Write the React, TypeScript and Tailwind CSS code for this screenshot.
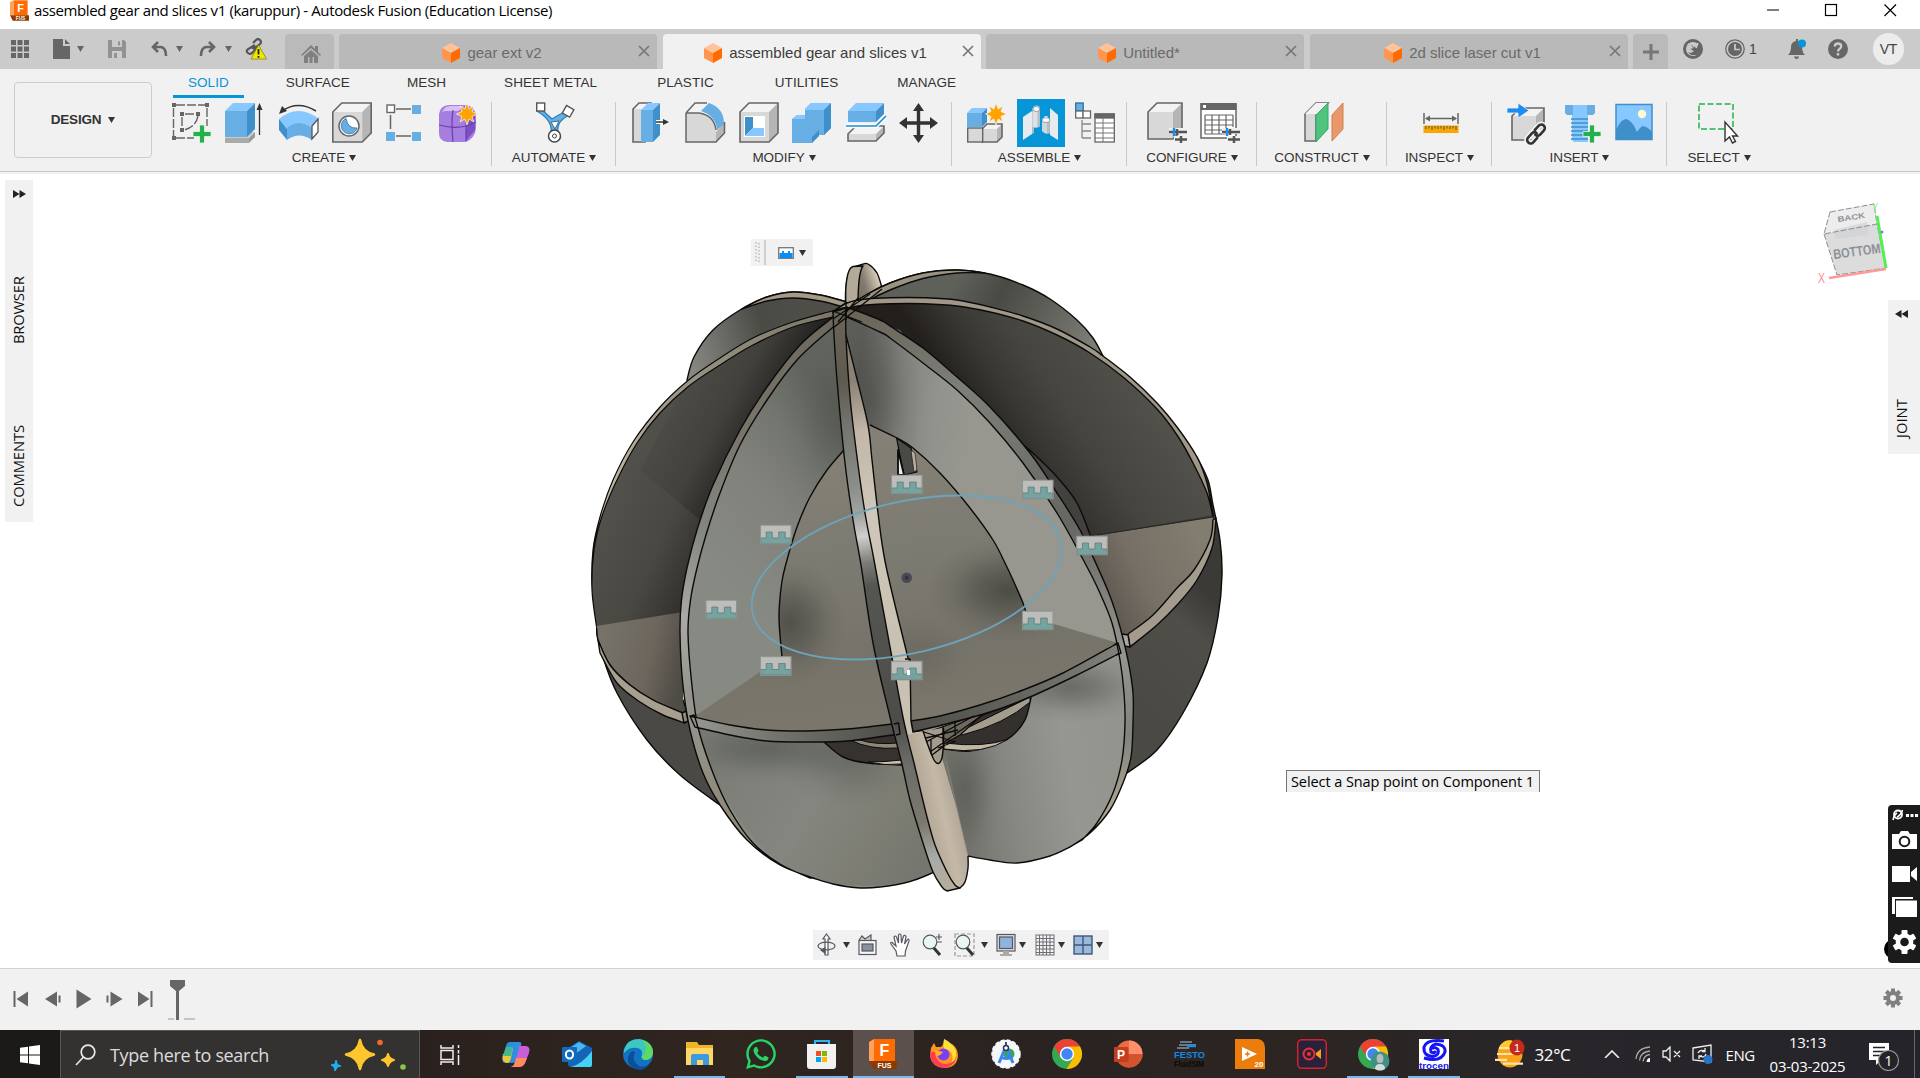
import React from "react";
import { FaWhatsapp } from "react-icons/fa";

type Pt = [number, number];

/* Smooth curve through a list of "x,y" points. */
function curve(points: string, start: "M" | "L" = "M"): string {
  const p: Pt[] = points
    .trim()
    .split(/\s+/)
    .map((s) => s.split(",").map(Number) as Pt);
  let d = `${start}${p[0][0]} ${p[0][1]}`;
  for (let i = 0; i < p.length - 1; i++) {
    const a = p[i - 1] ?? p[i];
    const b = p[i];
    const c = p[i + 1];
    const e = p[i + 2] ?? c;
    const x1 = b[0] + (c[0] - a[0]) / 6;
    const y1 = b[1] + (c[1] - a[1]) / 6;
    const x2 = c[0] - (e[0] - b[0]) / 6;
    const y2 = c[1] - (e[1] - b[1]) / 6;
    d += `C${x1.toFixed(1)} ${y1.toFixed(1)} ${x2.toFixed(1)} ${y2.toFixed(1)} ${c[0]} ${c[1]}`;
  }
  return d;
}

const rev = (points: string) => points.trim().split(/\s+/).reverse().join(" ");
const band = (outer: string, inner: string) => curve(outer) + curve(rev(inner), "L") + "Z";

/* ---------- Model curves ---------- */
const backLeftOut = "687,380 694,357 713,330 740,310 767,297 793,292 820,295 847,302";
const backLeftIn = "742,309 767,301 793,298 820,301 847,308";
const backRightOut = "832,319 847,307 866,295 890,283 923,273 957,270 990,274 1023,285 1050,299 1077,320 1093,338 1103.5,357";
const backRightIn = "832,328 847,315 866,302 890,290 923,278.5 957,273 985,273";
const rightOut =
  "833,312 847,303 866,299 890,297.7 923,297.7 957,300 990,307 1023,316 1057,329 1090,347 1103,356 1130,377 1157,403 1177,427 1197,457 1207,483 1213,515";
const rightIn = "847,308 866,305 890,303.7 923,303.7 957,306 990,312 1023,321 1057,335 1090,353 1123,377 1157,409 1177,435 1193,463 1207,493 1213,517";
const rightSilhouette = "1197,457 1208,480 1213,505 1220,540 1222,575 1218,617 1207,663 1183,713 1157,750 1127,773";
const leftOut = "847,307 832,311 793,322 753,338 720,358 687.7,380.7 660,407 633,442 613,480 600,517 593,550 592,590 596.7,628";
const leftIn = "847,313 832,317 793,327 753,345 720,365 687.7,387 660,413 637,443 617,480 601.7,517 594,550";
const leftSilhouette = "596.7,628 601.7,653 617,693 647,740 680,775 720,805";
const aOut =
  "847,307 832,318 800,345 767,387 740,430 713,485 697,530 687,568 681.5,600 680,633 682.7,683 690,730 703,773 720,805 747,840 780,865 813,878";
const aIn =
  "847,317 832,328 797,360 767,400 740,445 720,493 706,535 697,568 690.5,600 688,633 691.7,683 698,727 713,773 730,810 753,843 780,864 810,878";
const aBottom = "813,878 833,884 857,887.7 880,887 910,881.5 933,872.7";
const aHole = "844,450 827,470 810,497 797,527 787,560 781.7,583 779,617 782,657";
const cOut =
  "833,313 847,308 880,320 890,326 923,348 957,377 990,407 1030,453 1057,493 1080,530 1098,568 1110,596 1120,627 1128,660 1133,693 1133,723 1131,757 1123,783 1110,810 1090,833 1070,847";
const cIn =
  "847,317 880,332 890,338 923,363 957,390 990,423 1023,463 1057,513 1086,565 1099,591 1112,623 1120,660 1124,693 1125,723 1122,760 1113,793 1097,823 1082,840";
const cBottom = "1070,847 1050,856 1017,863 990,860 968,856";
const cHole = "870,425 895,437 913,448 940,473 970,508 993,540 1005,563 1013,580 1023,603 1027,616";
const rimLT = "690,716 730,725 767,730 807,731 847,729 892,724 898,723";
const rimLB = "695,727 730,735 767,741 807,742 847,741 900,734";
const rimRT = "910.7,721 940,716 980,705 1023,690 1063,673 1118,643";
const rimRB = "913,732 950,723 990,712 1030,697 1073,677 1120,653";
const dL = "833,312 834,335 837,380 845,463 853,520 861,565 873,643 890,717 901.7,763 910,800 923,843 933,872 942,887 947,891";
const dR = "846,308 846,337 850,397 857,457 865,513 874,560 890,647 904,722 914,763 926,813 935,845 947,872 955,885 960,888";
const creamR = "846,335 856,375 868,425 872,460 878,513 886,566 908,658";
const farRimIn = "598,640 610,665 630,685 653,700 683,713";
const farRimOut = "600,653 617,683 640,702 663,715 685,723";
const nearRimIn = "1213,520 1210,540 1194,570 1177,588 1153,615 1128,634";
const nearRimOut = "1216,518 1212,548 1197,580 1177,605 1157,625 1130,647";

const snapPoints: Pt[] = [
  [906.7, 484.5],
  [1037.7, 489.5],
  [1092, 545.5],
  [775.7, 534.5],
  [721.3, 609.5],
  [775.7, 666],
  [1037.7, 620.5],
  [906.7, 670.5],
];

function Lin(props: { id: string; x1: number; y1: number; x2: number; y2: number; stops: [number, string][] }) {
  const { id, x1, y1, x2, y2, stops } = props;
  return (
    <linearGradient id={id} gradientUnits="userSpaceOnUse" x1={x1} y1={y1} x2={x2} y2={y2}>
      {stops.map(([o, c], i) => (
        <stop key={i} offset={o} stopColor={c} />
      ))}
    </linearGradient>
  );
}

function Model() {
  const faceA = curve(aIn) + curve(aBottom, "L") + "L915 820L846 317Z";
  const faceC = curve(cIn) + curve(cBottom, "L") + "L945 750L905 735L846 425L846 317Z";
  const floor = curve(aHole) + "L698 714" + curve(rimLT, "L") + curve(rimRT, "L") + "L1027 616" + curve(rev(cHole), "L") + "Z";
  return (
    <svg className="block h-[650px] w-[650px]" viewBox="580 250 650 650" fill="none">
      <defs>
        <Lin id="gBackL" x1={690} y1={360} x2={840} y2={310} stops={[[0, "#868781"], [0.22, "#6d6e69"], [0.5, "#4b4b46"], [1, "#504f4a"]]} />
        <Lin id="gBackR" x1={960} y1={275} x2={1090} y2={350} stops={[[0, "#5e605a"], [0.3, "#4a4a45"], [0.65, "#61625c"], [1, "#7c7e77"]]} />
        <Lin id="gLeft" x1={600} y1={480} x2={735} y2={540} stops={[[0, "#54534e"], [0.55, "#484742"], [0.85, "#33312e"], [1, "#242220"]]} />
        <Lin id="gLeftTop" x1={690} y1={380} x2={770} y2={425} stops={[[0, "#4a4944"], [0.5, "#403f3a"], [1, "#1f1d1b"]]} />
        <Lin id="gRight" x1={968} y1={410} x2={1100} y2={320} stops={[[0, "#221f1c"], [0.25, "#383632"], [0.5, "#45443f"], [1, "#52514c"]]} />
        <Lin id="gRightLow" x1={1130} y1={700} x2={1215} y2={600} stops={[[0, "#4b4944"], [0.7, "#504e49"], [1, "#3b3a37"]]} />
        <Lin id="gFloorL" x1={600} y1={640} x2={685} y2={660} stops={[[0, "#77736a"], [0.6, "#6c665d"], [1, "#4f4b45"]]} />
        <Lin id="gFloorR" x1={1105} y1={610} x2={1210} y2={560} stops={[[0, "#5c564e"], [0.4, "#766f66"], [1, "#817d6f"]]} />
        <Lin id="gA" x1={700} y1={560} x2={850} y2={420} stops={[[0, "#878983"], [0.45, "#80827b"], [0.75, "#73756f"], [1, "#62645e"]]} />
        <Lin id="gA2" x1={730} y1={740} x2={930} y2={860} stops={[[0, "#7b7d76"], [0.45, "#84867f"], [0.75, "#7d7d73"], [1, "#74776f"]]} />
        <Lin id="gC" x1={855} y1={420} x2={965} y2={430} stops={[[0, "#5e5e5a"], [0.35, "#7f7f7b"], [0.7, "#92928d"], [1, "#979790"]]} />
        <Lin id="gC2" x1={950} y1={790} x2={1120} y2={760} stops={[[0, "#73736d"], [0.35, "#888883"], [0.7, "#979791"], [1, "#93948d"]]} />
        <Lin id="gFloor" x1={850} y1={440} x2={880} y2={740} stops={[[0, "#858076"], [0.35, "#7d7c72"], [0.7, "#76736a"], [1, "#7c776b"]]} />
        <Lin id="gD" x1={835} y1={310} x2={950} y2={890} stops={[[0, "#6b6557"], [0.12, "#5f5a50"], [0.2, "#747670"], [0.3, "#8b8e89"], [0.35, "#a4a6a2"], [0.385, "#cfcfcd"], [0.43, "#7b7b78"], [0.47, "#555551"], [0.7, "#4c4c48"], [0.78, "#6d6e69"], [0.88, "#7b796e"], [0.94, "#a9aaa7"], [1, "#b7ae9b"]]} />
        <Lin id="gCream" x1={850} y1={380} x2={905} y2={640} stops={[[0, "#8b8174"], [0.2, "#c2b7a8"], [0.5, "#cfc7b9"], [1, "#c9c1b1"]]} />
        <Lin id="gCreamLow" x1={920} y1={793} x2={960} y2={784} stops={[[0, "#b3a897"], [0.45, "#c4b8a7"], [0.8, "#b4a999"], [1, "#948c80"]]} />
        <Lin id="gRimA" x1={850} y1={310} x2={740} y2={840} stops={[[0, "#6b665c"], [0.25, "#77746a"], [0.45, "#83857f"], [0.62, "#aaa9a5"], [0.75, "#969690"], [1, "#8e8775"]]} />
        <Lin id="gRimC" x1={860} y1={310} x2={1110} y2={820} stops={[[0, "#6a6457"], [0.2, "#7c7f79"], [0.5, "#666762"], [0.75, "#94958f"], [0.88, "#81837c"], [1, "#b0a894"]]} />
        <Lin id="gRimL" x1={690} y1={720} x2={900} y2={730} stops={[[0, "#979892"], [0.4, "#74756e"], [1, "#4b4a46"]]} />
        <Lin id="gRimR" x1={910} y1={720} x2={1120} y2={650} stops={[[0, "#4f4e4a"], [0.5, "#64655f"], [1, "#7f817a"]]} />
        <Lin id="gTab" x1={850} y1={290} x2={880} y2={280} stops={[[0, "#6a6354"], [0.5, "#857b6e"], [1, "#ddd2be"]]} />
        <Lin id="gTan" x1={600} y1={500} x2={850} y2={310} stops={[[0, "#c6bca8"], [0.4, "#9c9687"], [1, "#7a7365"]]} />
        <radialGradient id="shade">
          <stop offset="0" stopColor="#2e302c" stopOpacity="0.7" />
          <stop offset="0.35" stopColor="#2e302c" stopOpacity="0.45" />
          <stop offset="0.7" stopColor="#2e302c" stopOpacity="0.13" />
          <stop offset="1" stopColor="#2e302c" stopOpacity="0" />
        </radialGradient>
        <clipPath id="clipFloor">
          <path d={floor} />
        </clipPath>
        <clipPath id="clipA">
          <path d={faceA} />
        </clipPath>
        <clipPath id="clipC">
          <path d={faceC} />
        </clipPath>
      </defs>

      <g stroke="#0c0b0a" strokeWidth="1.4" strokeLinejoin="round">
        {/* rear discs */}
        <path d={curve(backLeftOut) + "L847 325L700 400Z"} fill="url(#gBackL)" />
        <path d={band("742,309 767,297 793,292 820,295 847,302", backLeftIn)} fill="#a39a89" />
        <path d={curve("846,315 845.7,290 850,270 862,264.5 868,264 877,273 882,288") + "L884 320Z"} fill="url(#gTab)" />
        <path d="M845.7 310V290Q847 268 853 266.500L863 266Q858 272 858 306Z" fill="#b4aa98" />
        <path d={curve(backRightOut) + "L1000 360L850 320Z"} fill="url(#gBackR)" />
        <path d={band("832,319 847,307 866,295 890,283 923,273 957,270 985,273", backRightIn)} fill="#9b9382" />

        {/* right disc */}
        <path d={curve(rightSilhouette) + "L1090 640L1100 500Z"} fill="url(#gRightLow)" />
        <path d={curve(rightOut) + "L1086 537L900 330Z"} fill="url(#gRight)" stroke="none" />
        <path d={band(rightOut, rightIn)} fill="#9f9787" />
        <path d={curve("1022,444 1035,455 1057,477 1077,503 1092,540") + "L1080 560L1020 470Z"} fill="#43413d" />
        <path d={"M1082 538L1213 517" + curve(nearRimIn, "L") + "L1100 630Z"} fill="url(#gFloorR)" stroke="none" />
        <path d="M1090 536L1213 517" strokeWidth="1.2" stroke="#262421" />
        <path d={band(nearRimIn, nearRimOut)} fill="#a39c8d" />
        <path d="M1122 634L1128 635L1130 647L1124 646Z" fill="#a8a7a1" />

        {/* left disc */}
        <path d={curve(leftOut) + "L690 640L850 315Z"} fill="url(#gLeft)" stroke="none" />
        <path d={"M687 383" + curve("720,362 753,342 793,325 832,314 847,310", "L") + "L832 330L800 360L767 400L735 450L700 520L640 470Z"} fill="url(#gLeftTop)" stroke="none" opacity=".75" />
        <path d={"M596.7 628" + curve(leftSilhouette, "L") + "L683 700Z"} fill="#4b4945" />
        <path d={band(leftOut, leftIn + " 592,590 596.7,628")} fill="url(#gTan)" strokeWidth="1.2" />
        <path d={"M596.7 626L683 612V713" + curve(rev(farRimIn), "L") + "Z"} fill="url(#gFloorL)" stroke="none" />
        <path d={curve("596.7,628 598,640 610,665 630,685 653,700 683,713")} />
        <path d={band(farRimIn, farRimOut)} fill="#a79f8f" />
        <path d="M682 713L686 711L688 721L684 723Z" fill="#8e8c84" />

        {/* front faces */}
        <path d={faceA} fill="url(#gA)" stroke="none" />
        <path d="M695 727Q800 755 905 734L935 872L905 882Q850 893 800 874Q735 845 695 727Z" fill="url(#gA2)" stroke="none" />
        <path d={curve(aBottom)} />
        <g clipPath="url(#clipA)" stroke="none">
          <ellipse cx="840" cy="425" rx="60" ry="95" fill="url(#shade)" opacity=".35" />
          <ellipse cx="770" cy="748" rx="110" ry="36" fill="url(#shade)" opacity=".5" />
          <ellipse cx="850" cy="760" rx="70" ry="50" fill="url(#shade)" opacity=".4" />
        </g>
        <path d={faceC} fill="url(#gC)" stroke="none" />
        <path d={"M925 738L1120 653L1125 720Q1125 800 1070 847" + curve(cBottom, "L") + "L950 850Z"} fill="url(#gC2)" stroke="none" />
        <path d={curve(cBottom)} />
        <g clipPath="url(#clipC)" stroke="none">
          <ellipse cx="872" cy="400" rx="50" ry="100" fill="url(#shade)" opacity=".5" />
          <ellipse cx="1070" cy="687" rx="80" ry="36" fill="url(#shade)" opacity=".6" />
          <ellipse cx="966" cy="790" rx="36" ry="80" fill="url(#shade)" opacity=".45" />
        </g>

        {/* floor disc seen through the openings */}
        <path d={floor} fill="url(#gFloor)" stroke="none" />
        <g clipPath="url(#clipFloor)" stroke="none">
          <ellipse cx="790" cy="622" rx="55" ry="62" fill="url(#shade)" opacity=".75" />
          <ellipse cx="1008" cy="590" rx="82" ry="52" fill="url(#shade)" opacity=".85" />
          <ellipse cx="920" cy="655" rx="55" ry="45" fill="url(#shade)" opacity=".2" />
        </g>
        <path d={curve(aHole)} />
        <path d={curve(cHole)} />
        <path d="M896.5 438L904 475L917 472L911 448Z" fill="#494945" strokeWidth="1.2" />
        <path d="M898 450V475H904Z" fill="#e8e8e8" strokeWidth="1.8" />
        <path d="M911 450L914 472L917 470L915 453Z" fill="#b9b0a4" strokeWidth=".6" />

        {/* lower rear openings */}
        <path d={curve("824,742 843,757 867,763 902,765") + "L898 734Z"} fill="#35322f" />
        <path d="M850 740Q870 750 898 748V743Q875 745 860 740Z" fill="#8f8879" strokeWidth="1" />
        <path d="M868 762Q885 766 902 764V760Q885 762 868 762Z" fill="#c9c0ae" strokeWidth="1" />
        <path d={curve("1031,698 1025,720 1013,735 1000,743 970,751 944,749") + "L930 735L990 712Z"} fill="#33302d" />
        <path d="M944 749Q985 755 1008 739Q985 748 944 743Z" fill="#c0b7a4" strokeWidth="1" />
        <path d="M957 733L1030 697L1030 702Q1005 724 962 735Z" fill="#a49c8c" strokeWidth="1" />
        <path d="M925 733L985 712L960 735L928 753Z" fill="#6f6a60" strokeWidth="1.2" />

        {/* disc rims */}
        <path d={band(rimRT, rimRB)} fill="url(#gRimR)" />
        <path d={band(aOut, aIn)} fill="url(#gRimA)" />
        <path d={band(cOut, cIn)} fill="url(#gRimC)" />
        <path d={band(rimLT, rimLB)} fill="url(#gRimL)" />
        <path d="M1114 645L1118 643L1121 653L1116 655" />
        <path d="M691 716L694 715Q696 720 698 728" />

        {/* front upright disc */}
        <path d={curve(creamR) + "L911 687V721L913 732H923L942 760L957 810L968 856L966 880L960 888" + curve(rev(dR), "L") + "Z"} fill="url(#gCream)" stroke="none" />
        <path d={"M905 735L923 732L942 758L957 810L968 856Q969 884 960 888" + curve("960,888 947,872 935,845 914,763 905,735", "L") + "Z"} fill="url(#gCreamLow)" stroke="none" />
        <path d={curve(creamR)} />
        <path d="M905 659L910 659L911 721L913 732L923 730" />
        <path d={curve("968,856 968,868 965,882 960,888")} />
        <path d={band(dL, dR)} fill="url(#gD)" />
        <path d="M894 724L898.5 723L900 734L896 735" />
        <path d="M923 731Q930 752 934 760Q939 768 942 758Q944 748 943.500 728" fill="#a39b8c" />
        <path d="M926 738L958 730M926 742L974 716M930 752L984 714M932 755L944 746M938 748L956 741M955 722V736M924 732L955 742M943 726V742M931 740V754" strokeWidth="1.3" />
        <path d="M945 757L968 856" stroke="#8a8275" strokeWidth="1" opacity=".6" />

        {/* crossing point at the pole */}
        <path d="M832 312L847 302M833 319L870 294M833 328L882 289M846 303L846 320M833 311L862 322M838 322L858 298" strokeWidth="1.3" />
      </g>

      <ellipse cx="906.7" cy="577.5" rx="158.200" ry="75.600" transform="rotate(-13.2 906.7 577.5)" stroke="#6ba4bb" strokeWidth="1.8" />
      <circle cx="906.7" cy="577.700" r="5.300" fill="#4c4957" />
      <circle cx="906.7" cy="577.700" r="2" fill="#34323d" />
      {snapPoints.map(([x, y]) => (
        <g key={`${x}-${y}`} transform={`translate(${x - 15.5} ${y - 9.500})`}>
          <rect width="31" height="19" fill="#bdbebb" />
          <path d="M.5 18.500V13H6V7H12V13H18.500V7H25V13H30.500V18.500Z" fill="#75a39f" stroke="#5f7c79" strokeWidth=".8" />
          <rect x=".2" y=".2" width="30.600" height="18.600" stroke="#8d918d" strokeWidth="1" />
        </g>
      ))}
      <path d="M907 670h3v5h-3z" fill="#fff" />
    </svg>
  );
}

/* ---------- Small shared pieces ---------- */
function Caret({ className = "" }: { className?: string }) {
  return (
    <svg className={`h-[6px] w-[7px] shrink-0 ${className}`} viewBox="0 0 7 6">
      <path d="M0 0H7L3.500 6Z" fill="currentColor" />
    </svg>
  );
}

function Cube() {
  return (
    <svg className="h-5 w-[18px] shrink-0" viewBox="0 0 18 20">
      <path d="M9 0L18 5L9 10L0 5Z" fill="#ffc39a" />
      <path d="M0 5L9 10V20L0 15Z" fill="#ff954f" />
      <path d="M18 5L9 10V20L18 15Z" fill="#ff6b00" />
    </svg>
  );
}

function Cross() {
  return (
    <svg className="h-3 w-3 shrink-0" viewBox="0 0 12 12" fill="none" stroke="#777" strokeWidth="1.700">
      <path d="M1 1L11 11M11 1L1 11" />
    </svg>
  );
}

function FusionLogo({ className }: { className: string }) {
  return (
    <svg className={className} viewBox="0 0 28 30">
      <path d="M5 0H26V22H5Z" fill="#ff6b00" />
      <path d="M0 3L5 0V22H0Z" fill="#ffa05c" />
      <path d="M0 22H28V30H4Z" fill="#8d3a00" />
      <text x="15.500" y="17" fontSize="16" fontWeight="700" fill="#fff" textAnchor="middle" fontFamily="Liberation Sans, sans-serif">F</text>
      <text x="15.500" y="28.700" fontSize="7" fontWeight="700" fill="#fff" textAnchor="middle" fontFamily="Liberation Sans, sans-serif">FUS</text>
    </svg>
  );
}

/* ---------- Ribbon icons, all on a 40 x 42 grid ---------- */
const B1 = "#86c8ff";
const B2 = "#66aee4";
const B3 = "#3f8fca";
const G1 = "#f3f3f3";
const G2 = "#d8d8d8";
const G3 = "#b5b5b5";
const K = "#666";

function Box(p: { x: number; y: number; w: number; h: number; d: number; c: [string, string, string]; line?: string }) {
  const { x, y, w, h, d, c, line } = p;
  return (
    <g>
      <path d={`M${x} ${y + d}H${x + w - d}V${y + h}H${x}Z`} fill={c[1]} />
      <path d={`M${x} ${y + d}L${x + d} ${y}H${x + w}L${x + w - d} ${y + d}Z`} fill={c[0]} />
      <path d={`M${x + w - d} ${y + d}L${x + w} ${y}V${y + h - d}L${x + w - d} ${y + h}Z`} fill={c[2]} />
      {line && <path d={`M${x} ${y + d}L${x + d} ${y}H${x + w}V${y + h - d}L${x + w - d} ${y + h}H${x}Z`} fill="none" stroke={line} strokeWidth="1.600" />}
    </g>
  );
}
const BLUE: [string, string, string] = [B1, B2, B3];
const GRAY: [string, string, string] = [G1, G2, G3];

function Plus({ x, y }: { x: number; y: number }) {
  return (
    <path
      transform={`translate(${x} ${y})`}
      d="M-2.500 -9H2.500V-2.500H9V2.500H2.500V9H-2.500V2.500H-9V-2.500H-2.500Z"
      fill="#22b14c"
      stroke="#f1f1f1"
      strokeWidth=".8"
    />
  );
}

function Burst({ x, y }: { x: number; y: number }) {
  return (
    <path
      transform={`translate(${x} ${y})`}
      d="M0 -11L2.200 -5L7 -8L5 -2.500L10.500 0L5 2.500L7 8L2.200 5L0 11L-2.200 5L-7 8L-5 2.500L-10.500 0L-5 -2.500L-7 -8L-2.200 -5Z"
      fill="#ffa300"
      stroke="#f1f1f1"
      strokeWidth=".8"
    />
  );
}

const ribbonIcons: Record<string, React.ReactNode> = {
  sketch: (
    <g>
      <path d="M4 3H33M1.500 6V34M35 6V24M4 36H22M13 12H24M10 15V26M26 14Q24 25 12 28" fill="none" stroke={K} strokeWidth="1.400" strokeDasharray="9 2" />
      {[[0, 1], [33, 1], [0, 34], [8, 10], [24, 10], [8, 26]].map(([x, y]) => (
        <rect key={`${x}-${y}`} x={x} y={y} width="4" height="4" fill={K} />
      ))}
      <Plus x={30} y={32} />
    </g>
  ),
  extrude: (
    <g>
      <Box x={0} y={30} w={30} h={11} d={6} c={["#ccc", "#aaa", "#999"]} />
      <Box x={0} y={1} w={30} h={34} d={8} c={BLUE} />
      <path d="M34.500 33V6" stroke="#333" strokeWidth="1.300" />
      <path d="M31.500 8L34.500 1L37.500 8Z" fill="#333" />
    </g>
  ),
  revolve: (
    <g>
      <path d="M0 17Q19 1 40 17L33 26Q20 16 8 27Z" fill={B1} />
      <path d="M0 17L8 27V38L0 28Z" fill={B3} />
      <path d="M8 26Q20 16 33 26V38Q20 29 8 38Z" fill={B2} />
      <path d="M33 24L39 17V30L33 37Z" fill="#fff" stroke="#555" strokeWidth="1.300" />
      <path d="M3 9Q19 -2 37 9" fill="none" stroke="#333" strokeWidth="1.500" />
      <path d="M0 12L3 4L8 9Z" fill="#333" />
    </g>
  ),
  hole: (
    <g>
      <Box x={0.8} y={1} w={38.4} h={39} d={9} c={GRAY} line={K} />
      <circle cx="17" cy="24" r="10" fill="#fff" stroke={K} strokeWidth="1.500" />
      <path d="M14 16.500A8 8 0 1 0 25 26Q16 27 14 16.500Z" fill={B2} stroke="#2d6f9f" strokeWidth=".8" />
    </g>
  ),
  pattern: (
    <g>
      <path d="M10 7H25M10 34H25M4.500 13V27" stroke={K} strokeWidth="1.500" />
      <rect x="1" y="3" width="7.500" height="7.500" fill="#fff" stroke={K} strokeWidth="1.400" />
      <rect x="26" y="3" width="9" height="9" fill={B2} />
      <rect x="0" y="30" width="9" height="9" fill={B2} />
      <rect x="26" y="30" width="9" height="9" fill={B2} />
    </g>
  ),
  form: (
    <g>
      <path d="M0 12Q1 4 9 3H26Q36 4 37 14V26Q36 36 27 40H8Q0 39 0 31Z" fill="#a67ee0" />
      <path d="M3 10Q6 4 11 4H25L19 9H6Z" fill="#d8bff5" />
      <path d="M27 15L36 10V28L27 39Z" fill="#7c4fc4" />
      <path d="M0 23Q15 27 27 24L37 20M14 8Q12 20 14 40M27 14V39" fill="none" stroke="#6b3fb0" strokeWidth="1.200" />
      <Burst x={28} y={12} />
    </g>
  ),
  automate: (
    <g>
      <path d="M4 6L16 17Q20 14 31 9L35 12Q25 17 23 22Q21 27 22 35H15Q16 26 14 22Q11 15 1 9Z" fill={B2} stroke="#2d7fb8" strokeWidth="1.300" />
      <path d="M15 20L23 19L19 27Z" fill="#fff" stroke="#3c6d8e" />
      <rect x="0.700" y="1" width="8" height="8" fill="#fff" stroke="#555" strokeWidth="1.400" />
      <rect x="28" y="5" width="8.500" height="8.500" transform="rotate(30 32 9)" fill="#fff" stroke="#555" strokeWidth="1.400" />
      <circle cx="18.500" cy="34" r="6" fill="#fff" stroke="#444" strokeWidth="1.500" />
      <circle cx="18.500" cy="34" r="2" fill="none" stroke="#444" />
    </g>
  ),
  press: (
    <g>
      <Box x={1} y={1} w={18} h={39} d={6} c={GRAY} line={K} />
      <Box x={9} y={1} w={19} h={39} d={7} c={BLUE} />
      <path d="M24 20H32" stroke="#fff" strokeWidth="4" />
      <path d="M24 20H33" stroke="#333" strokeWidth="1.500" />
      <path d="M31 17L37 20L31 23Z" fill="#333" />
    </g>
  ),
  fillet: (
    <g>
      <path d="M1 11L10 1H24L16 11Z" fill={G1} />
      <path d="M1 11H14Q29 13 31 30V40H1Z" fill={G2} />
      <path d="M31 30L40 20V31L31 40Z" fill={G3} />
      <path d="M16 9L24 1Q39 6 39 22L32 28Q31 14 16 9Z" fill={B2} />
      <path d="M1 11L10 1H22M1 11V40H31L39.500 31V20M1 11H14Q29 13 31 28" fill="none" stroke={K} strokeWidth="1.500" />
    </g>
  ),
  shell: (
    <g>
      <Box x={1} y={1} w={38} h={39} d={9} c={GRAY} line={K} />
      <rect x="5" y="14" width="21" height="21" fill="#fff" />
      <path d="M6 15H14V26L6 34Z" fill={B3} />
      <path d="M14 26H25V34H6Z" fill={B1} />
    </g>
  ),
  combine: (
    <g>
      <path d="M0 17L5 13H13V7L19 1H39V26L32 33H26V33L20 41H0Z" fill={B2} />
      <path d="M0 17L5 13H13V7L19 1H39L32 8H13V17Z" fill={B1} />
      <path d="M32 8L39 1V26L32 33ZM20 35L27 28V34L20 41Z" fill={B3} />
    </g>
  ),
  split: (
    <g>
      <Box x={2} y={1} w={36} h={19} d={8} c={BLUE} />
      <Box x={2} y={24} w={36} h={15} d={8} c={GRAY} line={K} />
      <path d="M0 24H30L40 14" fill="none" stroke="#fff" strokeWidth="4.500" />
      <path d="M0 24H30L40 14" fill="none" stroke="#1d8cd8" strokeWidth="1.700" />
    </g>
  ),
  move: (
    <g fill="#333">
      <path d="M17.800 7H21.200V35H17.800ZM6 19.300H33V22.700H6Z" />
      <path d="M14 9L19.500 1L25 9ZM14 33L19.500 41L25 33ZM8 15L0 21L8 27ZM31 15L39 21L31 27Z" />
    </g>
  ),
  component: (
    <g>
      <Box x={0} y={6} w={20} h={19} d={5} c={BLUE} />
      <Box x={15} y={22} w={20} h={18} d={5} c={GRAY} line={K} />
      <rect x="0.700" y="26" width="15" height="14" fill={G2} stroke={K} strokeWidth="1.400" />
      <Burst x={29} y={12} />
    </g>
  ),
  joint: (
    <g>
      <path d="M0 15L9 9V32L0 38Z" fill="#e6ebef" />
      <path d="M9 9L11 11V31L9 32Z" fill="#aeb9c1" />
      <path d="M9.500 7Q10 3.500 13.500 3.500Q17 3.500 17 7V24Q14 27 9.500 25Z" fill="#dbe2e7" />
      <path d="M14.500 8V25.500Q17 25 17 23.500V7Z" fill="#b2bec7" />
      <ellipse cx="13.300" cy="7" rx="3.400" ry="2.600" fill="#f6f8fa" stroke="#8498a5" strokeWidth=".9" />
      <path d="M27 6L35 13V38L27 33Z" fill="#e6ebef" />
      <path d="M19 18V29Q22 33 27 31V18Z" fill="#cfd8de" />
      <path d="M24 18H27V31L24 31.500Z" fill="#b2bec7" />
      <ellipse cx="23" cy="18" rx="4" ry="2.500" fill="#fff" stroke="#8498a5" strokeWidth=".9" />
      <path d="M21.500 17V14H24.500V17" fill="#cfd8de" />
    </g>
  ),
  joints: (
    <g fill="none" stroke={K} strokeWidth="1.300">
      <rect x="0.700" y="1" width="7.500" height="8" fill={B2} stroke="#2d6f9f" />
      <rect x=".7" y="9" width="7.500" height="7" fill="#fff" />
      <rect x="8" y="9" width="7.500" height="7" fill="#fff" />
      <path d="M7 18V36M7 22H16M7 29H16M7 36H16" stroke="#888" />
      <rect x="20" y="12" width="19.300" height="28" fill="#fff" />
      <rect x="20" y="12" width="19.300" height="4" fill={K} />
      <path d="M20 21H39M20 26H39M20 31H39M20 36H39M28 16V40" stroke="#777" strokeWidth="1" />
    </g>
  ),
  configure: (
    <g>
      <Box x={1} y={1} w={34} h={36} d={9} c={GRAY} line={K} />
      <path d="M22 29H40M27 37H40" stroke="#f1f1f1" strokeWidth="6" />
      <path d="M22 30H40M28 37.500H40M30 27V33M34 34V41" stroke="#555" strokeWidth="2.500" />
      <path d="M27 26V34" stroke="#1d8cf0" strokeWidth="2.500" />
    </g>
  ),
  table: (
    <g>
      <rect x="1" y="2" width="35" height="34" fill="#fff" stroke={K} strokeWidth="1.500" />
      <rect x="0.500" y="1" width="36" height="7" fill={K} />
      <rect x="3" y="3" width="3" height="3" fill="#fff" />
      <path d="M5 13H33M5 18H33M5 23H33M5 28H33M5 32H25M5 13V32M12 13V32M19 13V32M26 13V28M33 13V25" stroke={K} strokeWidth="1.200" />
      <path d="M22 29H40M27 37H40" stroke="#f1f1f1" strokeWidth="6" />
      <path d="M22 30H40M28 37.500H40M30 27V33M34 34V41" stroke="#555" strokeWidth="2.500" />
      <path d="M27 26V34" stroke="#1d8cf0" strokeWidth="2.500" />
    </g>
  ),
  plane: (
    <g>
      <path d="M1 12L12 1H24L12 13V39H1Z" fill={G2} stroke={K} strokeWidth="1.500" />
      <path d="M1 12L12 1H24L13 12Z" fill={G1} />
      <path d="M12 13L24 1V27L12 40Z" fill="#4fc47f" stroke="#35a866" />
      <path d="M28 13L39 1V27L28 39Z" fill="#e8986a" stroke="#cf7f50" />
    </g>
  ),
  measure: (
    <g>
      <path d="M3 11V22M37 11V22M5 16.500H35" stroke={K} strokeWidth="1.500" />
      <path d="M4 16.500L9 13.500V19.500ZM36 16.500L31 13.500V19.500Z" fill={K} />
      <rect x="2.500" y="23.500" width="35" height="7.500" fill="#f7a700" />
      <path d="M5 24V27M8 24V26.500M11 24V28M14 24V26.500M17 24V27M20 24V26.500M23 24V28M26 24V26.500M29 24V27M32 24V26.500M35 24V28" stroke="#555" strokeWidth="1" />
    </g>
  ),
  insert: (
    <g>
      <Box x={5} y={6} w={32} h={32} d={8} c={GRAY} line={K} />
      <path d="M0 6H11V1L22 8.500L11 16V11H0Z" fill="#1d8cf0" stroke="#f1f1f1" strokeWidth=".8" />
      <g transform="translate(29 32) rotate(-48)" fill="none" strokeLinecap="round">
        <path d="M-8 -3.500H0A3.500 3.500 0 0 1 0 3.500H-8A3.500 3.500 0 0 1 -8 -3.500ZM2 -3.500H8A3.500 3.500 0 0 1 8 3.500H2" stroke="#f1f1f1" strokeWidth="6" />
        <path d="M-2 3.500H-8A3.500 3.500 0 0 1 -8 -3.500H-2A3.500 3.500 0 0 1 1 0M2 -3.500H8A3.500 3.500 0 0 1 8 3.500H2A3.500 3.500 0 0 1 -1 0" stroke="#333" strokeWidth="2.600" />
      </g>
    </g>
  ),
  bolt: (
    <g>
      <path d="M4 3H34V11L32 13H6L4 11Z" fill={B2} />
      <path d="M12 3H26V13H12Z" fill={B1} />
      <path d="M11 13H27V40H13L11 38Z" fill={B1} />
      <path d="M10 17H27M10 21H27M10 25H27M10 29H27M10 33H27M10 37H27" stroke={B3} strokeWidth="1.700" />
      <Plus x={31} y={32} />
    </g>
  ),
  image: (
    <g>
      <rect x="1" y="2.500" width="36" height="35" fill={B1} />
      <path d="M1 28Q6 17 11 17Q17 18 22 30Q25 25 28 24Q33 25 37 30V37.500H1Z" fill={B3} />
      <circle cx="27" cy="12" r="4.200" fill="#fffbd0" />
      <rect x="1" y="2.500" width="36" height="35" fill="none" stroke={B3} strokeWidth="1.500" />
    </g>
  ),
  select: (
    <g>
      <rect x="-2" y="2" width="34" height="25" fill="none" stroke="#22b14c" strokeWidth="1.500" strokeDasharray="6 2.500" />
      <path d="M24 20V39L28.500 35L31.500 41L34.500 39.500L31.500 34H36.500Z" fill="#fff" stroke="#333" strokeWidth="1.400" />
    </g>
  ),
};

const groups: { label: string; width: string; icons: string[] }[] = [
  { label: "CREATE", width: "w-[336px]", icons: ["sketch", "extrude", "revolve", "hole", "pattern", "form"] },
  { label: "AUTOMATE", width: "w-[124px]", icons: ["automate"] },
  { label: "MODIFY", width: "w-[336px]", icons: ["press", "fillet", "shell", "combine", "split", "move"] },
  { label: "ASSEMBLE", width: "w-[175px]", icons: ["component", "joint", "joints"] },
  { label: "CONFIGURE", width: "w-[130px]", icons: ["configure", "table"] },
  { label: "CONSTRUCT", width: "w-[130px]", icons: ["plane"] },
  { label: "INSPECT", width: "w-[105px]", icons: ["measure"] },
  { label: "INSERT", width: "w-[175px]", icons: ["insert", "bolt", "image"] },
  { label: "SELECT", width: "w-[103px]", icons: ["select"] },
];

const workspaceTabs: { name: string; gap: string }[] = [
  { name: "SOLID", gap: "" },
  { name: "SURFACE", gap: "ml-[57px]" },
  { name: "MESH", gap: "ml-[57px]" },
  { name: "SHEET METAL", gap: "ml-[58px]" },
  { name: "PLASTIC", gap: "ml-[60px]" },
  { name: "UTILITIES", gap: "ml-[61px]" },
  { name: "MANAGE", gap: "ml-[59px]" },
];

function TitleBar() {
  return (
    <header className="flex h-[29px] shrink-0 items-center bg-white pl-[10px]">
      <FusionLogo className="mb-[9px] h-[21px] w-[19px]" />
      <h1 className="mb-[10px] ml-[5px] whitespace-nowrap font-['Open_Sans',sans-serif] text-[15px] leading-5 tracking-[-0.375px] text-black">
        assembled gear and slices v1 (karuppur) - Autodesk Fusion (Education License)
      </h1>
      <svg className="mb-[9px] ml-auto mr-[23px] h-[14px] w-[130px]" viewBox="0 0 130 14" fill="none" stroke="#000" strokeWidth="1.200">
        <path d="M0 7H12M117.500 1.500L129 13M129 1.500L117.500 13" />
        <rect x="58.500" y="1.500" width="11" height="11" />
      </svg>
    </header>
  );
}

function DocTab({ title, active = false }: { title: string; active?: boolean }) {
  return (
    <div className={`relative flex h-[35px] w-[318px] items-center justify-center gap-[7px] rounded-t pr-[12px] pt-[2px] ${active ? "bg-[#f1f1f1] text-[#3c3c3c]" : "bg-[#b9b9b9] text-[#6a6a6a]"}`}>
      <Cube />
      <span className="whitespace-nowrap text-[15px] leading-5">{title}</span>
      <span className="absolute right-[7px] top-[11px]">
        <Cross />
      </span>
    </div>
  );
}

function TabBar() {
  return (
    <div className="flex h-10 shrink-0 items-end bg-[#cbcbcb]">
      <div className="flex w-[285px] items-center self-center pl-[11px] text-[#666]">
        <svg className="h-[18px] w-[18px]" viewBox="0 0 18 18" fill="#666">
          {[0, 6.5, 13].map((y) => [0, 6.5, 13].map((x) => <rect key={`${x}-${y}`} x={x} y={y} width="5" height="5" />))}
        </svg>
        <svg className="ml-6 h-5 w-[17px]" viewBox="0 0 17 20" fill="#666">
          <path d="M0 0H10V7H17V20H0ZM12 0L17 5H12Z" />
        </svg>
        <Caret className="ml-[7px]" />
        <svg className="ml-6 h-[18px] w-[18px]" viewBox="0 0 18 18">
          <path d="M0 0H16L18 2V18H0Z" fill="#929292" />
          <path d="M4 0H14V7H4ZM4 11H14V18H4Z" fill="#cbcbcb" />
          <path d="M10 1.500H12V5.500H10ZM6 13H9V18H6Z" fill="#929292" />
        </svg>
        <svg className="ml-[25px] h-[16px] w-[17px]" viewBox="0 0 17 16" fill="none" stroke="#666" strokeWidth="2.600">
          <path d="M7 1L2 6L7 11M2 6H10Q15 7 15 15" />
        </svg>
        <Caret className="ml-[8px]" />
        <svg className="ml-[16px] h-[16px] w-[17px]" viewBox="0 0 17 16" fill="none" stroke="#666" strokeWidth="2.600">
          <path d="M10 1L15 6L10 11M15 6H7Q2 7 2 15" />
        </svg>
        <Caret className="ml-[9px]" />
        <svg className="ml-[13px] h-[22px] w-[22px]" viewBox="0 0 22 22" fill="none">
          <path d="M8 5L11 2Q13 0 15 2Q17 4 15 6L10 10Q8 11 7 9M10 7L5 10Q1 12 2 14Q4 17 7 15L10 12Q11 9 9 8" stroke="#555" strokeWidth="2.200" />
          <path d="M13.500 7L21.500 21H6Z" fill="#f0e800" stroke="#8b8400" strokeWidth=".8" />
          <path d="M13.500 11V16.500M13.500 18V19.800" stroke="#222" strokeWidth="1.800" />
        </svg>
      </div>
      <div className="flex gap-[5.500px]">
        <div className="flex h-[35px] w-[48.500px] items-center justify-center rounded-t bg-[#bababa] pl-[3px]">
          <svg className="mt-1 h-[18px] w-[20px]" viewBox="0 0 20 18" fill="#808080">
            <path d="M0 10L10 0L14 4V1H17V7L20 10L19 11L10 3L1 11Z" />
            <path d="M3 11L10 5L17 11V18H13V12H11.500V18H8.500V12H7V18H3Z" />
          </svg>
        </div>
        <DocTab title="gear ext v2" />
        <DocTab title="assembled gear and slices v1" active />
        <DocTab title="Untitled*" />
        <DocTab title="2d slice laser cut v1" />
        <div className="flex h-[35px] w-[35px] items-center justify-center rounded-t bg-[#bababa] pl-px">
          <svg className="h-4 w-4" viewBox="0 0 16 16" stroke="#777" strokeWidth="3">
            <path d="M8 0V16M0 8H16" />
          </svg>
        </div>
      </div>
      <div className="flex flex-1 items-center self-center pl-[15px]">
        <svg className="h-5 w-5" viewBox="0 0 20 20">
          <circle cx="10" cy="10" r="8.500" fill="none" stroke="#666" strokeWidth="3" />
          <path d="M2 5L10 2L18 5V12L14 16H8L5 13L8 14L11 12L7 10L11 9L5 6L9 6L14 9L14 3L8 2Z" fill="#666" />
          <path d="M5 5L9 8M9.500 4L11 8M15 4L13 9" stroke="#cbcbcb" strokeWidth="1.600" />
        </svg>
        <svg className="ml-[22px] h-5 w-5" viewBox="0 0 20 20" fill="none" stroke="#666">
          <circle cx="10" cy="10" r="9.200" strokeWidth="1.300" />
          <circle cx="10" cy="10" r="7" strokeWidth="0" fill="#666" />
          <path d="M10 5V10.500H15" stroke="#cbcbcb" strokeWidth="1.700" />
        </svg>
        <span className="ml-1 text-[14px] leading-5 text-[#444]">1</span>
        <svg className="ml-[31px] h-5 w-[19px]" viewBox="0 0 19 20">
          <path d="M0 16Q3 13 3 8Q3 3 8 2V0H10V2Q14 3 14 8Q14 13 17 16ZM6 17.500H11Q10.500 20 8.500 20Q6.500 20 6 17.500Z" fill="#666" />
          <circle cx="14" cy="4.500" r="4" fill="#0696d7" />
        </svg>
        <svg className="ml-[21px] h-5 w-5" viewBox="0 0 20 20">
          <circle cx="10" cy="10" r="10" fill="#666" />
          <path d="M6.800 7.500Q7 4.500 10 4.500Q13.200 4.500 13.200 7.300Q13.200 9 11.200 10.200Q10 11 10 12.500M10 14V16.500" fill="none" stroke="#cbcbcb" strokeWidth="2.400" />
        </svg>
        <span className="ml-[25px] flex h-[32px] w-[31px] items-center justify-center rounded-full bg-[#ececec] text-[14px] tracking-[-0.500px] text-[#444]">VT</span>
      </div>
    </div>
  );
}

function Ribbon() {
  return (
    <div className="flex h-[105px] shrink-0 border-b-[3px] border-[#f1f1f1] bg-[#f1f1f1]">
      <div className="flex h-[103px] w-full border-b-[1.500px] border-[#c6c6c6]">
        <button className="ml-[14px] mt-[13px] flex h-[76px] w-[138px] shrink-0 items-center justify-center gap-[7px] rounded border-[1.500px] border-[#cdcdcd] text-[13.500px] font-bold tracking-[-0.200px] text-[#333]">
          DESIGN
          <Caret />
        </button>
        <div className="ml-1">
          <nav className="flex h-[30px] pl-8 text-[13.500px] tracking-[0.050px] text-[#333]">
            {workspaceTabs.map((t) => (
              <span key={t.name} className={`relative pt-[4px] leading-5 ${t.gap} ${t.name === "SOLID" ? "text-[#0696d7]" : ""}`}>
                {t.name}
                {t.name === "SOLID" && <i className="absolute -left-[15px] top-[26px] h-[3px] w-[71px] bg-[#0696d7]" />}
              </span>
            ))}
          </nav>
          <div className="mt-[3px] flex">
            {groups.map((g) => (
              <div key={g.label} className={`flex h-[64px] flex-col items-center justify-between ${g.width} ${g.label === "SELECT" ? "" : "border-r-[1.500px] border-[#c9c9c9]"}`}>
                <div className="flex gap-[13.600px] pl-[4px]">
                  {g.icons.map((n) => (
                    <div key={n} className={`flex ${n === "joint" ? "-mx-1 -mt-[3px] h-[48px] w-12 items-center justify-center bg-[#0696d7]" : "h-[42px] w-10"}`}>
                      <svg className={n === "joint" ? "h-[42px] w-[36px]" : "h-[42px] w-10 overflow-visible"} viewBox={n === "joint" ? "0 0 36 42" : "0 0 40 42"}>
                        {ribbonIcons[n]}
                      </svg>
                    </div>
                  ))}
                </div>
                <div className="-mb-[2px] flex items-center gap-[4px] pl-px text-[13.500px] leading-5 tracking-[-0.050px] text-[#333]">
                  {g.label}
                  <Caret />
                </div>
              </div>
            ))}
          </div>
        </div>
      </div>
    </div>
  );
}

function ViewCube() {
  return (
    <svg className="h-[86px] w-[74px]" viewBox="1816 200 74 86">
      <path d="M1831 212L1875 204L1878 224L1825 234Z" fill="#ededed" />
      <path d="M1825 234L1878 224L1887 268L1838 275Z" fill="#dcdcdd" />
      <path d="M1835 230L1868 222L1870 235L1837 239Z" fill="#cfd1d5" opacity=".7" />
      <path d="M1831 212L1875 204L1878 224L1825 234ZM1825 234L1838 275L1887 268L1878 224" fill="none" stroke="#8e8e8e" strokeWidth="1" strokeDasharray="6 2" />
      <path d="M1878 216L1887 268" stroke="#55ee55" strokeWidth="3" />
      <path d="M1830 278L1887 269" stroke="#ff9a9a" strokeWidth="2.500" />
      <circle cx="1883" cy="232" r="1.500" fill="#7a7aff" />
      <g fontFamily="Liberation Sans, sans-serif">
        <text x="1819" y="283" fontSize="15" fill="#ff8d8d" textLength="7" lengthAdjust="spacingAndGlyphs">X</text>
        <text x="1873" y="212" fontSize="12" fill="#7fee7f" textLength="6" lengthAdjust="spacingAndGlyphs">Y</text>
        <text transform="matrix(.98 -.15 .12 .75 1839 222)" fontSize="10" fontWeight="700" fill="#8d9197" textLength="28" lengthAdjust="spacingAndGlyphs">BACK</text>
        <text transform="matrix(.98 -.13 .14 1 1835 259)" fontSize="13.500" fontWeight="700" fill="#8d9197" textLength="48" lengthAdjust="spacingAndGlyphs">BOTTOM</text>
      </g>
    </svg>
  );
}

function NavBar() {
  const ink = "#54585f";
  return (
    <div className="flex h-[30px] w-[296px] items-center bg-[#f1f1f1] pl-1 text-[#333]">
      <svg className="h-6 w-[19px]" viewBox="0 0 19 24" fill="none" stroke={ink} strokeWidth="1.200">
        <path d="M9.500 1L13 6H11V22H8V6H6Z" fill="#fff" />
        <ellipse cx="9.500" cy="13" rx="8.500" ry="3.800" />
        <path d="M4 17L8 15V20Z" fill={ink} />
      </svg>
      <Caret className="ml-[7px]" />
      <svg className="ml-[8px] h-[22px] w-[19px]" viewBox="0 0 19 22" fill="none" stroke={ink} strokeWidth="1.200">
        <path d="M1 6L4 2L7 5L13 1V6" fill="#ccc" />
        <rect x="1" y="6.500" width="17" height="14" fill="#f7f7f7" />
        <rect x="4" y="10" width="11" height="7" fill="#8b929c" />
      </svg>
      <svg className="ml-[13px] h-6 w-5" viewBox="0 0 20 24" fill="#fff" stroke={ink} strokeWidth="1.200">
        <path d="M7 23L6 18L1 11Q0 9 2 9.500L6 13L4 4Q5 2 6.500 4L8.500 10L8.500 2Q9.500 0 11 2L11.500 10L13.500 3Q15 1.500 16 3.500L14.500 11L17.500 6.500Q19 5.500 19 8L15.500 18L15 23Z" />
      </svg>
      <svg className="ml-[12px] h-6 w-5" viewBox="0 0 20 24" fill="none" stroke={ink} strokeWidth="1.200">
        <path d="M11 14L18 22" stroke="#333" strokeWidth="3" />
        <circle cx="8" cy="9" r="6.800" fill="#eaf6f4" />
        <path d="M14 4H20M17 1V7M15 9H20" />
      </svg>
      <svg className="ml-[12px] h-6 w-[21px]" viewBox="0 0 21 24" fill="none" stroke={ink} strokeWidth="1.200">
        <rect x="1" y="1" width="19" height="22" stroke="#999" strokeDasharray="4 2" />
        <path d="M12 14L19 22" stroke="#333" strokeWidth="3" />
        <circle cx="9" cy="9" r="6.800" fill="#eaf6f4" />
      </svg>
      <Caret className="ml-[6px]" />
      <svg className="ml-[8px] h-6 w-[20px]" viewBox="0 0 20 24" fill="none" stroke={ink} strokeWidth="1.200">
        <rect x="1" y="1.500" width="18" height="16.500" fill="#dfe2e6" />
        <rect x="3.500" y="4" width="13" height="11.500" fill="#8fb3dc" />
        <path d="M7 18H13V21H16V23H4V21H7Z" fill="#aaa" stroke="none" />
      </svg>
      <Caret className="ml-[3px]" />
      <svg className="ml-[9px] h-[22px] w-[20px]" viewBox="0 0 20 22" fill="none" stroke="#6b6e74" strokeWidth="1">
        <rect x="1" y="1" width="18" height="20" fill="#f4f4f4" />
        <path d="M4.500 1V21M8 1V21M11.500 1V21M15 1V21M1 4.500H19M1 8H19M1 11.500H19M1 15H19M1 18.500H19" />
      </svg>
      <Caret className="ml-[3px]" />
      <svg className="ml-[8px] h-5 w-[20px]" viewBox="0 0 20 20" stroke="#3d5878" strokeWidth="1.400">
        <rect x="1" y="1" width="18" height="18" fill="#9cb9dd" />
        <path d="M10 1V19M1 10H19" />
      </svg>
      <Caret className="ml-[3px]" />
    </div>
  );
}

function Recorder() {
  return (
    <div className="h-[158px] w-8 rounded-l bg-[#1b1b1b]">
      <svg className="h-[158px] w-8" viewBox="0 0 32 158" fill="#fff">
        <circle cx="10" cy="9.500" r="4" fill="none" stroke="#fff" strokeWidth="1.800" />
        <path d="M5 15Q6 10 9 8M14.500 5Q13 10 9 12" stroke="#fff" strokeWidth="1.600" fill="none" />
        <path d="M18 9H21V12H18ZM22.500 9H25.500V12H22.500ZM27 9H30V12H27Z" />
        <path d="M4 29H11L13 26H20L22 29H29V44H4Z" />
        <circle cx="16.500" cy="36.500" r="4.800" fill="none" stroke="#1b1b1b" strokeWidth="2" />
        <path d="M4 61H22V77H4ZM23 67L29 62V76L23 71Z" />
        <path d="M4 92H25V94H7V109H4Z" />
        <rect x="8" y="95.500" width="21" height="16.500" />
        <g transform="translate(16.500 137)">
          {[0, 60, 120].map((a) => (
            <rect key={a} x="-3" y="-12" width="6" height="24" rx="1" transform={`rotate(${a})`} />
          ))}
          <circle r="8.800" />
          <circle r="4.300" fill="#1b1b1b" />
        </g>
      </svg>
    </div>
  );
}

function Canvas() {
  return (
    <main className="relative flex-1 overflow-hidden bg-white font-['Open_Sans',sans-serif] text-[#111]">
      <div className="flex justify-start pl-[580px] pt-[76px]">
        <Model />
      </div>
      <aside className="absolute left-[5px] top-[6px] flex h-[342px] w-7 flex-col items-center bg-[#f1f1f1] text-[14.800px]">
        <svg className="mt-[10px] h-2 w-[13px]" viewBox="0 0 13 8" fill="#222">
          <path d="M0 0L6.500 4L0 8ZM6.500 0L13 4L6.500 8Z" />
        </svg>
        <span className="mr-[3px] mt-[77px] h-[70px] rotate-180 whitespace-nowrap text-center leading-5 tracking-[-0.260px] [writing-mode:vertical-rl]">BROWSER</span>
        <span className="mr-[3px] mt-[77px] h-[88px] rotate-180 whitespace-nowrap text-center leading-5 tracking-[-0.150px] [writing-mode:vertical-rl]">COMMENTS</span>
      </aside>
      <aside className="absolute right-0 top-[126px] flex h-[154px] w-8 flex-col items-center bg-[#f1f1f1] pr-[6px] text-[14.800px]">
        <svg className="mt-[10px] h-2 w-[13px]" viewBox="0 0 13 8" fill="#222">
          <path d="M6.500 0L0 4L6.500 8ZM13 0L6.500 4L13 8Z" />
        </svg>
        <span className="mr-px mt-[79px] h-[44px] rotate-180 whitespace-nowrap text-center leading-5 [writing-mode:vertical-rl]">JOINT</span>
      </aside>
      <div className="absolute left-[751px] top-[65px] flex h-[27px] w-[62px] items-center bg-[#f1f1f1]">
        <svg className="h-[27px] w-[16px]" viewBox="0 0 16 27" fill="none">
          <path d="M5 3V24M8 4V24" stroke="#bbb" strokeWidth="1.500" strokeDasharray="1.500 2" />
          <path d="M14 1V26" stroke="#c2c2c2" strokeWidth="1.500" />
        </svg>
        <svg className="ml-[11px] h-3 w-4" viewBox="0 0 16 12">
          <rect x=".7" y=".7" width="14.600" height="10.600" fill="#fff" stroke="#777" strokeWidth="1.300" />
          <path d="M1.500 11V6H4V4H6V6H10V4H12V6H14.500V11Z" fill="#0a8cf5" />
        </svg>
        <Caret className="ml-[5px] text-[#333]" />
      </div>
      <div className="absolute right-[31px] top-[26px]">
        <ViewCube />
      </div>
      <div className="absolute left-[1286px] top-[596px] flex h-[22px] w-[254px] items-center border border-b-0 border-[#777] bg-[#f1f1f1] pl-[4px]">
        <span className="whitespace-nowrap text-[14.500px] leading-5 tracking-[-0.080px] text-black">Select a Snap point on Component 1</span>
      </div>
      <i className="absolute right-[12px] top-[765px] h-[20px] w-[24px] rounded-full bg-black" />
      <div className="absolute right-0 top-[631px]">
        <Recorder />
      </div>
      <div className="absolute left-[813px] top-[756px]">
        <NavBar />
      </div>
    </main>
  );
}

function Timeline() {
  return (
    <div className="flex h-[62px] shrink-0 items-start border-t border-[#d2d2d2] bg-[#f1f1f1] pl-[13px]">
      <svg className="mt-[19px] h-[23px] w-[140px]" viewBox="0 0 140 23" fill="#666">
        <path d="M.5 3H2.500V19H.5ZM15 3.500V18.500L3.500 11ZM44 3.500V18.500L32 11ZM45.500 7.500H47.500V14.500H45.500ZM63.500 1.500V20.500L78.500 11ZM93.500 7.500H95.500V14.500H93.500ZM97.500 3.500V18.500L109.500 11ZM125 3.500V18.500L136.500 11ZM137.500 3H139.500V19H137.500Z" />
      </svg>
      <svg className="ml-[15px] mt-[11px] h-[41px] w-[28px]" viewBox="0 0 28 41">
        <path d="M2 0H17V6L11 11V40H8V11L2 6Z" fill="#666" />
        <path d="M0 39H6M16 39H27" stroke="#c4c4c4" strokeWidth="2" />
      </svg>
      <svg className="ml-auto mr-[17px] mt-[19px] h-5 w-5" viewBox="-10 -10 20 20" fill="#808080">
        {[0, 45, 90, 135].map((a) => (
          <rect key={a} x="-2" y="-9.500" width="4" height="19" transform={`rotate(${a})`} />
        ))}
        <circle r="7" />
        <circle r="3" fill="#f1f1f1" />
      </svg>
    </div>
  );
}

function ChromeLogo() {
  return (
    <g>
      <circle cx="15" cy="15" r="15" fill="#34a853" />
      <path d="M2 7.500A15 15 0 0 1 28 7.500L15 9L9 18Z" fill="#ea4335" />
      <path d="M28 7.500A15 15 0 0 1 14.500 30L21.500 18.500L16 7.500Z" fill="#fbbc04" />
      <circle cx="15" cy="15" r="7.200" fill="#fff" />
      <circle cx="15" cy="15" r="5.700" fill="#4285f4" />
    </g>
  );
}

const apps: { name: string; line?: boolean; art: React.ReactNode }[] = [
  {
    name: "copilot",
    art: (
      <g>
        <path d="M9 3H19Q21 3 20 7L16 21Q15 24 11 24H5Q0 24 2 17L5 7Q6 3 9 3Z" fill="#2a8fe0" />
        <path d="M2 15L6 14L12 9L10 19Q9 24 6 24Q0 23 2 15Z" fill="#ecc83a" />
        <path d="M5 8L12 8L10 17L2 17Z" fill="#43b88e" />
        <path d="M14 7H25Q30 8 28 14L24 24Q22 28 18 28H10Q13 27 14 23L18 9Q19 7 14 7Z" fill="#c85fd6" />
        <path d="M15 19L26 19L24 24Q22 28 18 28H10Q13 27 14 23Z" fill="#ff8a5c" />
      </g>
    ),
  },
  {
    name: "outlook",
    art: (
      <g>
        <path d="M6 9L17 2L30 9V26Q30 28 28 28H8L6 26Z" fill="#1664b8" />
        <path d="M8 9L17 3L24 7L12 16Z" fill="#49b7f0" />
        <path d="M30 12V26Q30 28 28 28H9Q20 25 30 12Z" fill="#45d0f5" />
        <rect x="0" y="8" width="15" height="15" rx="1" fill="#0f6cbd" />
        <ellipse cx="7.500" cy="15.500" rx="3.600" ry="4" fill="none" stroke="#fff" strokeWidth="2" />
      </g>
    ),
  },
  {
    name: "edge",
    art: (
      <g>
        <circle cx="15" cy="15" r="15" fill="#1272c4" />
        <path d="M1 11Q4 0 16 0Q30 2 30 14Q29 21 22 21Q17 20 19 16Q20 10 14 9Q6 8 1 14Z" fill="#3ec7c0" />
        <path d="M20 1Q30 5 30 14Q29 21 22 21Q18 20 19 17Q26 14 20 1Z" fill="#5fd95f" />
        <path d="M12 13Q8 22 16 27Q22 29 28 23Q20 36 8 28Q2 21 7 14Q9 11 12 13Z" fill="#0c4f96" />
      </g>
    ),
  },
  {
    name: "explorer",
    line: true,
    art: (
      <g>
        <path d="M1 3H12L14 6H28V26H1Z" fill="#f0b429" />
        <path d="M1 9H28V26H1Z" fill="#ffd767" />
        <path d="M6 26V17Q6 15 8 15H22Q24 15 24 17V26H18V21H12V26Z" fill="#3b9be0" />
      </g>
    ),
  },
  { name: "whatsapp", art: null },
  {
    name: "store",
    line: true,
    art: (
      <g>
        <path d="M8 6V2H22V6" fill="none" stroke="#2bb3f3" strokeWidth="2.200" />
        <path d="M0 5H29V27Q29 30 26 30H3Q0 30 0 27Z" fill="#f1f1f1" />
        <path d="M9 12H14V17H9Z" fill="#f25022" />
        <path d="M15 12H20V17H15Z" fill="#7fba00" />
        <path d="M9 18H14V23H9Z" fill="#00a4ef" />
        <path d="M15 18H20V23H15Z" fill="#ffb900" />
      </g>
    ),
  },
  { name: "fusion", line: true, art: null },
  {
    name: "firefox",
    art: (
      <g>
        <path d="M2 9L5 4L7 8L12 8Q15 5 15 0Q20 3 20 7L23 5Q29 9 29 17Q28 29 15 29Q3 28 1 17Z" fill="#ff9420" />
        <path d="M15 0Q24 4 27 12Q28 20 22 25Q27 12 15 10Q14 6 15 0Z" fill="#ffdf3a" />
        <path d="M1 13Q0 27 15 29Q24 28 27 20Q20 27 12 24Q6 20 6 13Z" fill="#ff3d55" />
        <circle cx="14.500" cy="15.500" r="6" fill="#7a3ff0" />
        <path d="M5 11L14 13Q11 17 8 17Z" fill="#ffb020" />
      </g>
    ),
  },
  {
    name: "studio",
    art: (
      <g>
        <circle cx="15" cy="15" r="14" fill="#f5f8fb" stroke="#f5f8fb" strokeWidth="1.500" strokeDasharray="4 2" />
        <circle cx="18" cy="15" r="5.500" fill="#34a853" />
        <path d="M15 7L8 24M15 7L22 24M9.500 18Q15 21 20.500 18" stroke="#3b82f6" strokeWidth="3" fill="none" />
        <circle cx="15" cy="9" r="2.500" fill="#fff" stroke="#2b3a4a" strokeWidth="1.500" />
        <path d="M15 3V6.500" stroke="#2b3a4a" strokeWidth="1.800" />
      </g>
    ),
  },
  { name: "chrome", art: <ChromeLogo /> },
  {
    name: "powerpoint",
    art: (
      <g>
        <circle cx="16" cy="15" r="13.500" fill="#ed6c47" />
        <path d="M16 1.500A13.500 13.500 0 0 1 29.500 15H16Z" fill="#ff8f6b" />
        <path d="M2.500 15H29.500A13.500 13.500 0 0 1 2.500 15Z" fill="#d35230" />
        <rect x="1" y="8" width="14.500" height="15" rx="1" fill="#c43e1c" />
        <text x="8" y="20" fontSize="12" fontWeight="700" fill="#fff" textAnchor="middle" fontFamily="Liberation Sans, sans-serif">P</text>
      </g>
    ),
  },
  {
    name: "festo",
    art: (
      <g fontFamily="Liberation Sans, sans-serif" fontWeight="700">
        <path d="M6 3H18M5 6H22M3 9H15" stroke="#667788" strokeWidth="2" />
        <path d="M13 7H22" stroke="#1c8fe0" strokeWidth="2.500" />
        <text x="0" y="19" fontSize="9.500" fill="#0f8ae6" textLength="31" lengthAdjust="spacingAndGlyphs">FESTO</text>
        <text x="0" y="28" fontSize="9" fill="#0a0a0a" textLength="30" lengthAdjust="spacingAndGlyphs">FluidSIM</text>
      </g>
    ),
  },
  {
    name: "robot",
    art: (
      <g>
        <path d="M0 0H23Q30 1 30 9V30H0Z" fill="#ec7c0c" />
        <path d="M7 8L22 15L7 22Z" fill="#fff" />
        <path d="M10 15H15M12.500 12.500V17.500" stroke="#ec7c0c" strokeWidth="1.400" />
        <text x="24" y="28" fontSize="8" fontWeight="700" fill="#fff" textAnchor="middle" fontFamily="Liberation Sans, sans-serif">20</text>
      </g>
    ),
  },
  {
    name: "recorder",
    art: (
      <g>
        <rect x=".7" y=".7" width="28.600" height="28.600" rx="4" fill="#27223a" stroke="#d2232e" strokeWidth="1.500" />
        <circle cx="12" cy="15" r="5.500" fill="none" stroke="#f02c35" strokeWidth="2" />
        <circle cx="12" cy="15" r="2" fill="#f02c35" />
        <path d="M19 14L24 10V20L19 16Z" fill="#f5a51d" />
      </g>
    ),
  },
  {
    name: "chrome-profile",
    line: true,
    art: (
      <g>
        <ChromeLogo />
        <circle cx="22" cy="22" r="9.500" fill="#3d9185" />
        <ellipse cx="22" cy="19.500" rx="3.400" ry="4.500" fill="#b8bdbb" />
        <path d="M17 30Q17 25 22 25Q27 25 27 30Q22 33 17 30Z" fill="#d6dad8" />
      </g>
    ),
  },
  {
    name: "trocen",
    line: true,
    art: (
      <g>
        <rect width="30" height="30" fill="#fff" />
        <path d="M25 2Q8 0 5 8Q4 17 14 17.500Q21 16 19 10.500Q16 7 13 10" fill="none" stroke="#1414f5" strokeWidth="3" />
        <path d="M5 19Q22 24 26 13Q27 6 17 5Q10 7 12 13Q15 15 17 12" fill="none" stroke="#1414f5" strokeWidth="3" />
        <text x="0" y="29.500" fontSize="9" fontWeight="700" fill="#1414f5" textLength="30" lengthAdjust="spacingAndGlyphs" fontFamily="Liberation Sans, sans-serif">trocen</text>
      </g>
    ),
  },
];

function AppArt({ name, art }: { name: string; art: React.ReactNode }) {
  if (name === "fusion") return <FusionLogo className="h-[30px] w-[28px]" />;
  if (name === "whatsapp") return <FaWhatsapp size={34} color="#25d366" />;
  return (
    <svg className="h-[30px] w-[30px] overflow-visible" viewBox="0 0 30 30">
      {art}
    </svg>
  );
}

function Taskbar() {
  return (
    <footer className="flex h-12 shrink-0 bg-[linear-gradient(90deg,#1f1d1b_0,#2a211e_22%,#30251f_38%,#2a2321_55%,#2c2522_68%,#28262a_80%,#25242a_100%)] font-['Open_Sans',sans-serif] text-white">
      <div className="flex w-[60px] items-center justify-center bg-[#1b1a19]">
        <svg className="mt-[2px] h-5 w-5" viewBox="0 0 20 20" fill="#fff">
          <path d="M0 2.800L8 1.700V9.500H0ZM9 1.500L20 0V9.500H9ZM0 10.500H8V18.300L0 17.200ZM9 10.500H20V20L9 18.500Z" />
        </svg>
      </div>
      <div className="flex w-[360px] items-center border-x border-t border-[#5a5857] bg-[#333231] pl-[14px]">
        <svg className="h-[22px] w-[21px]" viewBox="0 0 21 22" fill="none" stroke="#e8e8e8" strokeWidth="1.700">
          <circle cx="13" cy="8" r="6.800" />
          <path d="M8.500 13L1 21" />
        </svg>
        <span className="ml-[14px] w-[221px] whitespace-nowrap text-[18px] leading-6 tracking-[-0.350px] text-[#dcdcdc]">Type here to search</span>
        <svg className="h-[34px] w-[76px]" viewBox="0 0 76 34">
          <path d="M29 2Q31 14 43 16.500Q31 19 29 31Q27 19 15 16.500Q27 14 29 2Z" fill="#fdc62e" stroke="#fdc62e" strokeWidth="2.500" strokeLinejoin="round" />
          <path d="M57 16Q58 21 63 22Q58 23.500 57 28Q56 23.500 51 22Q56 21 57 16Z" fill="#fdc62e" stroke="#fdc62e" strokeWidth="2" strokeLinejoin="round" />
          <path d="M5 22L6.500 26.500L10 28L6.500 29L4 33L3 29L0 27L4 26Z" fill="#1fb0ee" stroke="#1fb0ee" />
          <circle cx="49" cy="4.500" r="2.800" fill="#f2672a" />
          <circle cx="72" cy="29" r="2.800" fill="#8cc63f" />
        </svg>
      </div>
      <div className="flex w-[65.500px] items-center justify-center">
        <svg className="mr-[5px] mt-[2px] h-5 w-[21px]" viewBox="0 0 21 20" fill="none" stroke="#eee" strokeWidth="1.500">
          <path d="M1 0V3H13V0M1 20V17H13V20M18.500 0V3M18.500 10V20M18.500 5V8.500" />
          <rect x="1" y="5.500" width="12" height="9" />
        </svg>
      </div>
      {apps.map((a) => (
        <div key={a.name} className={`relative flex w-[61.200px] items-center justify-center ${a.name === "fusion" ? "bg-[#5b504c]" : ""}`}>
          <AppArt name={a.name} art={a.art} />
          {a.line && <i className={`absolute bottom-0 h-[2px] bg-[#76b9ed] ${a.name === "fusion" ? "inset-x-0" : "inset-x-[5px]"}`} />}
        </div>
      ))}
      <div className="flex flex-1 items-center">
        <svg className="ml-[30px] h-[30px] w-[30px]" viewBox="0 0 30 28" preserveAspectRatio="none">
          <circle cx="15" cy="14" r="12.500" fill="#f9a31a" />
          <path d="M5 6Q10 0 17 1.500L18 9H4Z" fill="#ffc928" />
          <path d="M4 8.500H16M2 14H26M0 19.500H12M8 23H28" stroke="#ffe2a8" strokeWidth="2" />
          <circle cx="22" cy="8" r="7.500" fill="#c42b1c" />
          <text x="22" y="12" fontSize="11" fill="#fff" textAnchor="middle" fontFamily="Liberation Sans, sans-serif">1</text>
        </svg>
        <span className="ml-[10px] mt-px w-[69px] whitespace-nowrap text-[17px] leading-5 tracking-[-0.400px]">32°C</span>
        <svg className="h-2 w-4" viewBox="0 0 16 8" fill="none" stroke="#eee" strokeWidth="1.600">
          <path d="M1 8L8 1L15 8" />
        </svg>
        <svg className="ml-[15px] h-4 w-4" viewBox="0 0 16 16" fill="none" stroke="#aaa" strokeWidth="1.300">
          <path d="M1 13Q2 2 15 1M4.500 14.500Q5 6 15 5M8 15.500Q9 9 15 8.500" />
          <path d="M11.500 16Q12 12 15 12V16Z" fill="#fff" stroke="none" />
        </svg>
        <svg className="ml-[11px] h-4 w-[19px]" viewBox="0 0 19 16" fill="none" stroke="#eee" strokeWidth="1.300">
          <path d="M1 5H4L8 1V15L4 11H1ZM12 5L18 11M18 5L12 11" />
        </svg>
        <svg className="ml-[11px] h-5 w-[21px]" viewBox="0 0 21 20" fill="none" stroke="#eee" strokeWidth="1.300">
          <path d="M1 4L19 1V18L1 16Z" />
          <path d="M6 9Q8 5 13 7M13 4V7.500H10M14 10Q13 14 8 12.500M7 15V12H10" />
          <circle cx="16" cy="15.500" r="4.500" fill="#2a74c4" stroke="none" />
        </svg>
        <span className="ml-[13px] mt-px w-[30px] text-[15px] leading-5 tracking-[-0.400px]">ENG</span>
        <div className="ml-[11px] w-[82px] text-center text-[15px] leading-[24px] tracking-[-0.250px]">
          <div>13:13</div>
          <div className="whitespace-nowrap">03-03-2025</div>
        </div>
        <svg className="ml-[20px] mt-[2px] h-[32px] w-[32px]" viewBox="0 0 32 32">
          <path d="M0 4H20V21H12L7 26V21H0Z" fill="#fff" />
          <path d="M4 8.500H16M4 12.500H16M4 16.500H12" stroke="#222" strokeWidth="1.400" />
          <circle cx="19.500" cy="21.500" r="10" fill="#242327" stroke="#999" strokeWidth="1.200" />
          <text x="19.500" y="26.500" fontSize="14" fill="#fff" textAnchor="middle" fontFamily="Open Sans, sans-serif">1</text>
        </svg>
        <i className="ml-auto mr-[5px] h-12 w-px bg-[#666]" />
      </div>
    </footer>
  );
}

export default function App() {
  return (
    <div className="flex h-[1078px] w-[1920px] flex-col overflow-hidden bg-white font-['Liberation_Sans',Arial,sans-serif]">
      <TitleBar />
      <TabBar />
      <Ribbon />
      <Canvas />
      <Timeline />
      <Taskbar />
    </div>
  );
}
